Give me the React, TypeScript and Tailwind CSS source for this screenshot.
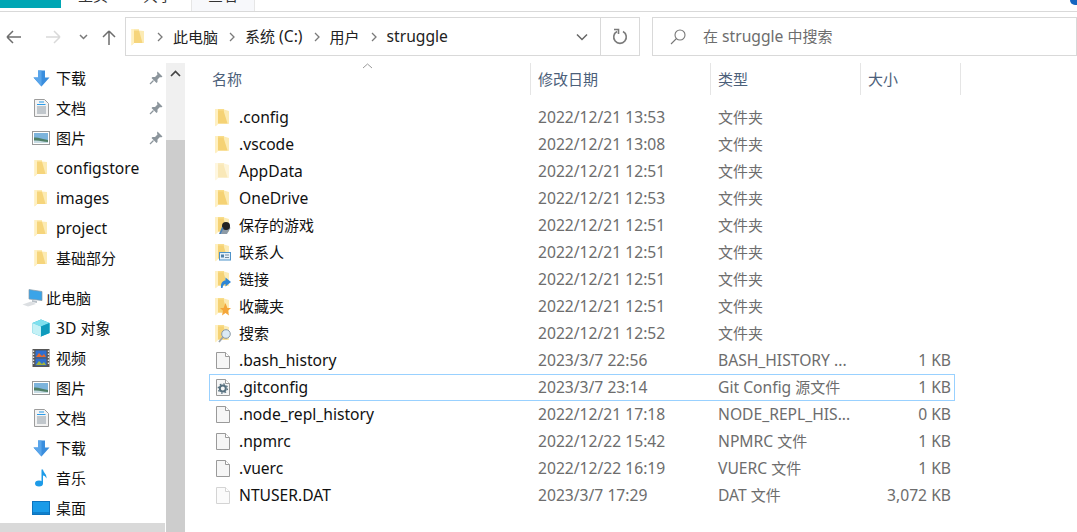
import React from "react";

const FONT = { fontFamily: '"Noto Sans","Noto Sans CJK SC",sans-serif' };

function Mixed({ text }: { text: string }) {
  const parts = text.split(/([\u4e00-\u9fff]+)/).filter(Boolean);
  return (
    <>
      {parts.map((p, i) =>
        /[\u4e00-\u9fff]/.test(p) ? (
          <span key={i} className="text-[15px]">{p}</span>
        ) : (
          <span key={i} className="text-[15.65px]">{p}</span>
        )
      )}
    </>
  );
}

function Folder({ faded = false, children }: { faded?: boolean; children?: React.ReactNode }) {
  return (
    <svg width="16" height="19" viewBox="0 0 16 19" className={faded ? "opacity-50" : ""}>
      <path d="M0.5 1H9V3L14 3V15.5H3L0.5 18Z" fill="#f9dd8a" />
      <path d="M9 1.5L14 3V15.5H9Z" fill="#fcebb4" />
      <path d="M3 2.5H8.5L12.5 15.5H3Z" fill="#f5d274" />
      <path d="M0.5 1H3V16L0.5 18.5Z" fill="#fff0c0" />
      {children}
    </svg>
  );
}

function NavFolder() {
  return (
    <svg width="14" height="18" viewBox="0 0 14 18">
      <path d="M0.5 1H8V2.5L13 3V15H3L0.5 17.5Z" fill="#fcebb4" />
      <path d="M3 2.5H8L11.5 15H3Z" fill="#f6d57c" />
      <path d="M0.5 1H3V15.5L0.5 17.5Z" fill="#fff0c0" />
    </svg>
  );
}

function FileIcon({ faded = false, gear = false }: { faded?: boolean; gear?: boolean }) {
  const stroke = faded ? "#d4d4d4" : "#9a9a9a";
  return (
    <svg width="16" height="19" viewBox="0 0 16 19">
      <path d="M1.5 1.5H10.5L14.5 5.5V17.5H1.5Z" fill={faded ? "#fbfbfb" : "#f6f6f6"} stroke={stroke} />
      <path d="M10.5 1.5V5.5H14.5" fill="#fff" stroke={stroke} />
      {gear && (
        <g>
          <circle cx="7.8" cy="10.5" r="3" fill="none" stroke="#56707f" strokeWidth="2" />
          <circle cx="7.8" cy="10.5" r="4.6" fill="none" stroke="#56707f" strokeWidth="1.3" strokeDasharray="1.6 2" />
        </g>
      )}
    </svg>
  );
}

function DownloadIcon() {
  return (
    <svg width="17" height="17" viewBox="0 0 17 17">
      <path d="M5 0.5H12V7.5H16.5L8.5 16.5L0.5 7.5H5Z" fill="#3a8ede" />
      <path d="M5 0.5H8.5V16.5L0.5 7.5H5Z" fill="#5aa5ea" />
    </svg>
  );
}

function DocIcon() {
  return (
    <svg width="15" height="18" viewBox="0 0 15 18">
      <path d="M0.5 0.5H10.5L14.5 4.5V17.5H0.5Z" fill="#f3f3f3" stroke="#9c9c9c" />
      <path d="M5 3H10M3 5.5H11.5" stroke="#2b9be8" strokeWidth="1.2" />
      <path d="M3 8H12M3 10H12M3 12H12M3 14H12" stroke="#8f9ba5" />
    </svg>
  );
}

function PictureIcon() {
  return (
    <svg width="18" height="14" viewBox="0 0 18 14">
      <rect x="0.5" y="0.5" width="17" height="13" fill="#fff" stroke="#9a9a9a" />
      <rect x="2" y="2" width="14" height="10" fill="#7db4dc" />
      <path d="M2 6.5C6 6 10 8 16 9V12H2Z" fill="#4f7f66" />
      <path d="M2 9.5C7 9 11 10.5 16 11V12H2Z" fill="#c6dbe3" />
    </svg>
  );
}

function PcIcon() {
  return (
    <svg width="21" height="18" viewBox="0 0 21 18">
      <path d="M7 0.5L20 2.5V11.5L7 10Z" fill="#3aa4e8" stroke="#8a99a5" strokeWidth="0.7" />
      <path d="M0.5 15.5L9 12.5L14 15L6 17.5Z" fill="#dcdfe2" />
      <path d="M10 11L15 12V14L10 13Z" fill="#b8c0c7" />
    </svg>
  );
}

function CubeIcon() {
  return (
    <svg width="18" height="18" viewBox="0 0 18 18">
      <path d="M9 0.5L17.5 4V14L9 17.5L0.5 14V4Z" fill="#19b4cf" />
      <path d="M9 0.5L17.5 4L9 7.5L0.5 4Z" fill="#7fe0ee" />
      <path d="M0.5 4L9 7.5V17.5L0.5 14Z" fill="#c4f1f6" />
      <path d="M9 7.5L17.5 4V14L9 17.5Z" fill="#0f9bbd" />
    </svg>
  );
}

function FilmIcon() {
  return (
    <svg width="18" height="18" viewBox="0 0 18 18">
      <rect x="0.5" y="0" width="17" height="18" fill="#565656" />
      <path d="M1.5 1.5V16.5M16.5 1.5V16.5" stroke="#e8e8e8" strokeWidth="1.4" strokeDasharray="1.5 1.5" />
      <rect x="3.5" y="1.5" width="11" height="7" fill="#2f6fd0" />
      <rect x="3.5" y="9.5" width="11" height="7" fill="#2f6fd0" />
      <path d="M4 8L7 4L10 7L12 5L14 8Z" fill="#e86a2c" />
      <path d="M4 16L7 12L10 15L12 13L14 16Z" fill="#a4b53a" />
    </svg>
  );
}

function MusicIcon() {
  return (
    <svg width="14" height="18" viewBox="0 0 14 18">
      <ellipse cx="5" cy="14.5" rx="4" ry="3" fill="#1d9be8" />
      <path d="M7.5 0.5H9C9.5 4 13 5 12.5 9.5C11.5 7.5 10.5 6.8 9 6.5V14.5H7.5Z" fill="#1d9be8" />
    </svg>
  );
}

function DesktopIcon() {
  return (
    <svg width="18" height="14" viewBox="0 0 18 14">
      <rect x="0.5" y="0.5" width="17" height="13" fill="#1a9be8" stroke="#0c74bf" />
      <rect x="1" y="11" width="16" height="2" fill="#0f7fcb" />
    </svg>
  );
}

function PinIcon() {
  return (
    <svg width="14" height="14" viewBox="0 0 14 14">
      <path d="M8.5 0.5L13.5 5.5L12 6.5L11 6L8.5 8.5L8.5 11L7.5 12L2.5 7L3.5 6L6 6L8.5 3.5L8 2Z" fill="#8c959c" />
      <path d="M4.5 9.5L1 13" stroke="#8c959c" strokeWidth="1.3" />
    </svg>
  );
}

function Chevron({ cls }: { cls: string }) {
  return (
    <svg width="8" height="10" viewBox="0 0 8 10" className={cls}>
      <path d="M2 1L6 5L2 9" fill="none" stroke="#7a7a7a" strokeWidth="1.3" />
    </svg>
  );
}

const overlays: Record<string, React.ReactNode> = {
  game: (
    <g>
      <path d="M6 18L7.5 9L13 8L15.5 12L12 18Z" fill="#8e9ba6" />
      <circle cx="11" cy="10" r="4" fill="#222" />
      <path d="M4 18L7 11L8.5 12L6 18Z" fill="#4a7fb5" />
    </g>
  ),
  contact: (
    <g>
      <rect x="4.5" y="9.5" width="11" height="7.5" fill="#e4f0fa" stroke="#4f93c9" />
      <rect x="6" y="11.5" width="3" height="3" fill="#4f7fa8" />
      <path d="M10 12H14M10 14.5H14" stroke="#7a8e9f" />
    </g>
  ),
  link: (
    <g>
      <path d="M6 18C5.5 12.5 8 10.5 10.5 10.5V7.5L16 12L10.5 16.5V14C9 14 8 15.5 7.5 18Z" fill="#2d86d6" />
    </g>
  ),
  star: <path d="M10.5 6L12.4 11H16L13 13.8L14 18.5L10.5 16L7 18.5L8 13.8L5 11H8.6Z" fill="#f4a63a" />,
  search: (
    <g>
      <circle cx="11" cy="10" r="4.3" fill="#dbeaf5" stroke="#8b9aa6" />
      <path d="M8 13L4 18" stroke="#9aa4ac" strokeWidth="1.7" />
    </g>
  ),
};

type SideItem = { icon: React.ReactNode; label: string; pin?: boolean };

const wrap = (n: React.ReactNode) => <span className="flex w-[18px] justify-center">{n}</span>;
const folderSmall = wrap(<NavFolder />);

const quick: SideItem[] = [
  { icon: wrap(<DownloadIcon />), label: "下载", pin: true },
  { icon: wrap(<DocIcon />), label: "文档", pin: true },
  { icon: wrap(<PictureIcon />), label: "图片", pin: true },
  { icon: folderSmall, label: "configstore" },
  { icon: folderSmall, label: "images" },
  { icon: folderSmall, label: "project" },
  { icon: folderSmall, label: "基础部分" },
];

const pc: SideItem[] = [
  { icon: wrap(<CubeIcon />), label: "3D 对象" },
  { icon: wrap(<FilmIcon />), label: "视频" },
  { icon: wrap(<PictureIcon />), label: "图片" },
  { icon: wrap(<DocIcon />), label: "文档" },
  { icon: wrap(<DownloadIcon />), label: "下载" },
  { icon: wrap(<MusicIcon />), label: "音乐" },
  { icon: wrap(<DesktopIcon />), label: "桌面" },
];

function SideRow({ item }: { item: SideItem }) {
  return (
    <div className="flex h-[30px] shrink-0 items-center pl-[32px] pr-[3px] leading-[30px] text-[#111]">
      {item.icon}
      <span className="ml-[6px] flex-1 whitespace-nowrap"><Mixed text={item.label} /></span>
      {item.pin && <PinIcon />}
    </div>
  );
}

type FileRow = {
  name: string;
  date: string;
  type: string;
  size?: string;
  icon: React.ReactNode;
  selected?: boolean;
};

const rows: FileRow[] = [
  { name: ".config", date: "2022/12/21 13:53", type: "文件夹", icon: <Folder /> },
  { name: ".vscode", date: "2022/12/21 13:08", type: "文件夹", icon: <Folder /> },
  { name: "AppData", date: "2022/12/21 12:51", type: "文件夹", icon: <Folder faded /> },
  { name: "OneDrive", date: "2022/12/21 12:53", type: "文件夹", icon: <Folder /> },
  { name: "保存的游戏", date: "2022/12/21 12:51", type: "文件夹", icon: <Folder>{overlays.game}</Folder> },
  { name: "联系人", date: "2022/12/21 12:51", type: "文件夹", icon: <Folder>{overlays.contact}</Folder> },
  { name: "链接", date: "2022/12/21 12:51", type: "文件夹", icon: <Folder>{overlays.link}</Folder> },
  { name: "收藏夹", date: "2022/12/21 12:51", type: "文件夹", icon: <Folder>{overlays.star}</Folder> },
  { name: "搜索", date: "2022/12/21 12:52", type: "文件夹", icon: <Folder>{overlays.search}</Folder> },
  { name: ".bash_history", date: "2023/3/7 22:56", type: "BASH_HISTORY ...", size: "1 KB", icon: <FileIcon /> },
  { name: ".gitconfig", date: "2023/3/7 23:14", type: "Git Config 源文件", size: "1 KB", icon: <FileIcon gear />, selected: true },
  { name: ".node_repl_history", date: "2022/12/21 17:18", type: "NODE_REPL_HIS...", size: "0 KB", icon: <FileIcon /> },
  { name: ".npmrc", date: "2022/12/22 15:42", type: "NPMRC 文件", size: "1 KB", icon: <FileIcon /> },
  { name: ".vuerc", date: "2022/12/22 16:19", type: "VUERC 文件", size: "1 KB", icon: <FileIcon /> },
  { name: "NTUSER.DAT", date: "2023/3/7 17:29", type: "DAT 文件", size: "3,072 KB", icon: <FileIcon faded /> },
];

export default function App() {
  return (
    <div className="flex h-[532px] w-[1077px] flex-col overflow-hidden bg-white" style={FONT}>
      {/* ribbon tabs, cropped at the top in the reference */}
      <div className="relative flex h-[12px] shrink-0 border-b border-[#d9d9d9]">
        <div className="h-[8px] w-[61px] bg-[#00a6b4]" />
        <div className="h-[8px] w-[65px] overflow-hidden pl-[17px]">
          <div className="-mt-[12px] whitespace-nowrap text-[15px] leading-[15px] text-[#333]">主页</div>
        </div>
        <div className="h-[8px] w-[65px] overflow-hidden pl-[17px]">
          <div className="-mt-[12px] whitespace-nowrap text-[15px] leading-[15px] text-[#333]">共享</div>
        </div>
        <div className="h-[11px] w-[64px] overflow-hidden border-x border-[#e6e6e6] bg-[#f7f8fb] pl-[16px]">
          <div className="-mt-[12px] whitespace-nowrap text-[15px] leading-[15px] text-[#333]">查看</div>
        </div>
        <div className="absolute right-0 top-0 h-[5px] w-[7px] rounded-bl-full bg-[#1565c0]" />
      </div>

      {/* navigation row */}
      <div className="flex h-[51px] shrink-0 items-start pt-[5px]">
        <div className="flex h-[39px] w-[125px] items-center">
          <svg width="125" height="20" viewBox="0 0 125 20">
            <path d="M7 10H21M7 10L13 4M7 10L13 16" fill="none" stroke="#6d6d6d" strokeWidth="1.5" />
            <path d="M46 10H60M60 10L54 4M60 10L54 16" fill="none" stroke="#d9d9d9" strokeWidth="1.5" />
            <path d="M80 8L83.5 11.5L87 8" fill="none" stroke="#7a7a7a" strokeWidth="1.5" />
            <path d="M109 18V4M109 4L103 10M109 4L115 10" fill="none" stroke="#6d6d6d" strokeWidth="1.5" />
          </svg>
        </div>
        <div className="flex h-[39px] w-[515px] items-center border border-[#d9d9d9] pl-[5px] text-[#222]">
          <NavFolder />
          <Chevron cls="ml-[11px]" />
          <span className="ml-[9px]"><Mixed text="此电脑" /></span>
          <Chevron cls="ml-[10px]" />
          <span className="ml-[9px] whitespace-nowrap"><Mixed text="系统 (C:)" /></span>
          <Chevron cls="ml-[10px]" />
          <span className="ml-[9px]"><Mixed text="用户" /></span>
          <Chevron cls="ml-[10px]" />
          <span className="ml-[9px]"><Mixed text="struggle" /></span>
          <div className="ml-auto flex h-full items-center">
            <svg width="12" height="8" viewBox="0 0 12 8" className="mr-[12px]">
              <path d="M1 1.5L6 6.5L11 1.5" fill="none" stroke="#666" strokeWidth="1.5" />
            </svg>
            <div className="flex h-full w-[39px] items-center justify-center border-l border-[#d9d9d9]">
              <svg width="16" height="18" viewBox="0 0 16 18">
                <path d="M5 3.5A6.3 6.3 0 1 0 11 3.5" fill="none" stroke="#7a7a7a" strokeWidth="1.6" />
                <path d="M2 1.5L6.5 1.5V6" fill="none" stroke="#7a7a7a" strokeWidth="1.6" />
              </svg>
            </div>
          </div>
        </div>
        <div className="ml-[12px] flex h-[39px] flex-1 items-center border border-[#d9d9d9] pl-[17px] text-[#6d6d6d]">
          <svg width="16" height="16" viewBox="0 0 16 16">
            <circle cx="10" cy="6" r="5" fill="none" stroke="#777" strokeWidth="1.1" />
            <path d="M6.5 9.5L1 15" stroke="#777" strokeWidth="1.1" />
          </svg>
          <span className="ml-[17px] whitespace-nowrap"><Mixed text="在 struggle 中搜索" /></span>
        </div>
      </div>

      {/* body */}
      <div className="flex min-h-0 flex-1">
        {/* sidebar */}
        <div className="flex w-[166px] shrink-0 flex-col overflow-hidden">
          {quick.map((i) => (
            <SideRow key={i.label} item={i} />
          ))}
          <div className="h-[10px] shrink-0" />
          <div className="flex h-[30px] shrink-0 items-center pl-[22px] text-[#111]">
            <PcIcon />
            <span className="ml-[3px]"><Mixed text="此电脑" /></span>
          </div>
          {pc.map((i) => (
            <SideRow key={i.label} item={i} />
          ))}
          <div className="mr-[1px] h-[30px] shrink-0 bg-[#d9d9d9]" />
        </div>

        {/* scrollbar */}
        <div className="flex w-[19px] shrink-0 flex-col bg-[#f0f0f0]">
          <div className="flex h-[77px] justify-center pt-[7px]">
            <svg width="11" height="7" viewBox="0 0 11 7">
              <path d="M1 6L5.5 1.5L10 6" fill="none" stroke="#444" strokeWidth="1.7" />
            </svg>
          </div>
          <div className="flex-1 bg-[#cdcdcd]" />
        </div>

        {/* file list */}
        <div className="relative min-w-0 flex-1">
          <div className="flex h-[32px] text-[15px] leading-[32px] text-[#4c607a]">
            <div className="w-[346px] border-r border-[#e5e5e5] pl-[27px]">名称</div>
            <div className="w-[180px] border-r border-[#e5e5e5] pl-[7px]">修改日期</div>
            <div className="w-[150px] border-r border-[#e5e5e5] pl-[7px]">类型</div>
            <div className="w-[100px] border-r border-[#e5e5e5] pl-[7px]">大小</div>
          </div>
          <svg width="11" height="6" viewBox="0 0 11 6" className="absolute left-[177px] top-0">
            <path d="M1 5L5.5 1L10 5" fill="none" stroke="#9a9a9a" />
          </svg>
          <div className="ml-[24px] mt-[9px] w-[746px]">
            {rows.map((r) => (
              <div
                key={r.name}
                className={
                  "flex h-[27px] items-center border pl-[5px] pr-[3px] leading-[25px] " +
                  (r.selected ? "border-[#99d1ff]" : "border-transparent")
                }
              >
                <span className="flex w-[24px] shrink-0">{r.icon}</span>
                <span className="w-[299px] shrink-0 whitespace-nowrap text-[#111]"><Mixed text={r.name} /></span>
                <span className="w-[180px] shrink-0 whitespace-nowrap text-[#6d6d6d]"><Mixed text={r.date} /></span>
                <span className="w-[140px] shrink-0 whitespace-nowrap text-[#6d6d6d]"><Mixed text={r.type} /></span>
                <span className="flex-1 whitespace-nowrap text-right text-[#6d6d6d]">{r.size && <Mixed text={r.size} />}</span>
              </div>
            ))}
          </div>
        </div>
      </div>
    </div>
  );
}
